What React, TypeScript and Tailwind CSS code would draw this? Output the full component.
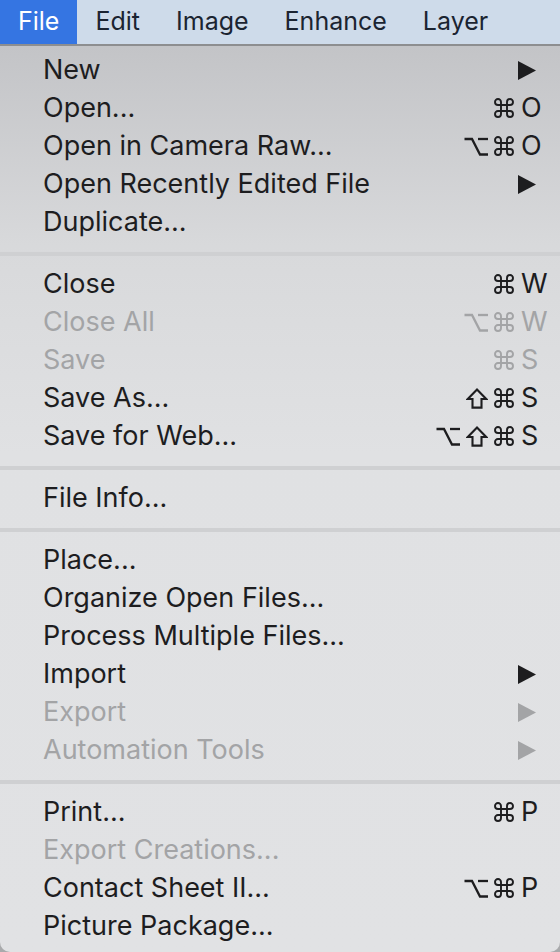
import React from "react";

type Item =
  | { sep: true }
  | { label: string; disabled?: boolean; sub?: boolean; mods?: string[]; key?: string; sep?: false };

const items: Item[] = [
  { label: "New", sub: true },
  { label: "Open...", mods: ["cmd"], key: "O" },
  { label: "Open in Camera Raw...", mods: ["opt", "cmd"], key: "O" },
  { label: "Open Recently Edited File", sub: true },
  { label: "Duplicate..." },
  { sep: true },
  { label: "Close", mods: ["cmd"], key: "W" },
  { label: "Close All", disabled: true, mods: ["opt", "cmd"], key: "W" },
  { label: "Save", disabled: true, mods: ["cmd"], key: "S" },
  { label: "Save As...", mods: ["shift", "cmd"], key: "S" },
  { label: "Save for Web...", mods: ["opt", "shift", "cmd"], key: "S" },
  { sep: true },
  { label: "File Info..." },
  { sep: true },
  { label: "Place..." },
  { label: "Organize Open Files..." },
  { label: "Process Multiple Files..." },
  { label: "Import", sub: true },
  { label: "Export", disabled: true, sub: true },
  { label: "Automation Tools", disabled: true, sub: true },
  { sep: true },
  { label: "Print...", mods: ["cmd"], key: "P" },
  { label: "Export Creations...", disabled: true },
  { label: "Contact Sheet II...", mods: ["opt", "cmd"], key: "P" },
  { label: "Picture Package..." },
];

function Triangle({ disabled }: { disabled?: boolean }) {
  return (
    <svg width="18" height="19" viewBox="0 0 18 19">
      <polygon points="0,0 18,9.5 0,19" fill={disabled ? "#a3a4a6" : "#1d1d1f"} />
    </svg>
  );
}

function Mod({ kind }: { kind: string }) {
  if (kind === "cmd")
    return (
      <svg width="20" height="20" viewBox="2 2 20 20" fill="none" stroke="currentColor" strokeWidth="1.9" strokeLinecap="round" strokeLinejoin="round">
        <path d="M15 6v12a3 3 0 1 0 3-3H6a3 3 0 1 0 3 3V6a3 3 0 1 0-3 3h12a3 3 0 1 0-3-3" />
      </svg>
    );
  if (kind === "opt")
    return (
      <svg width="24" height="19" viewBox="0 0 24 19" fill="none" stroke="currentColor" strokeWidth="2.3" strokeLinejoin="miter">
        <path d="M0.5 2h7.5l8 15.5h8" />
        <path d="M14 2h10" />
      </svg>
    );
  return (
    <svg width="22" height="21" viewBox="0 0 22 21" fill="none" stroke="currentColor" strokeWidth="2.1" strokeLinejoin="miter">
      <path d="M11 1.6L20.2 11h-4.7v8.6h-9V11H1.8z" />
    </svg>
  );
}

export default function App() {
  return (
    <div className="w-[560px] h-[952px] overflow-hidden bg-[#a9aaac] font-['Inter',sans-serif]">
      <div className="flex h-[46px] bg-[#cedbea] border-b-2 border-[#8d8e90] text-[25px] text-[#1b2431] overflow-hidden whitespace-nowrap">
        <div className="h-[44px] px-[18px] flex items-center bg-[#3575e2] text-white">File</div>
        <div className="h-[44px] px-[18px] flex items-center">Edit</div>
        <div className="h-[44px] px-[18px] flex items-center">Image</div>
        <div className="h-[44px] px-[18px] flex items-center">Enhance</div>
        <div className="h-[44px] px-[18px] flex items-center">Layer</div>
      </div>
      <div className="h-[906px] rounded-b-[10px] pt-[5px] bg-[linear-gradient(to_bottom,#c3c4c7_0%,#d8d9db_22%,#e0e1e3_45%,#e1e2e4_100%)] text-[27px]">
        {items.map((it, i) =>
          it.sep ? (
            <div key={i} className="h-[24px] pt-[11px]">
              <div className="h-[4px] bg-[#cfd0d2]" />
            </div>
          ) : (
            <div
              key={i}
              className={`flex items-center h-[38px] pl-[43px] whitespace-nowrap ${
                it.disabled ? "text-[#a3a4a6]" : "text-[#1d1d1f]"
              }`}
            >
              <div className="flex-1">{it.label}</div>
              {it.sub && (
                <div className="w-[42px] flex items-center">
                  <Triangle disabled={it.disabled} />
                </div>
              )}
              {it.key && (
                <div className="flex items-center">
                  <div className="flex items-center gap-[6px] mr-[7px]">
                    {it.mods!.map((m, j) => (
                      <Mod key={j} kind={m} />
                    ))}
                  </div>
                  <div className="w-[39px]">{it.key}</div>
                </div>
              )}
            </div>
          )
        )}
      </div>
    </div>
  );
}
